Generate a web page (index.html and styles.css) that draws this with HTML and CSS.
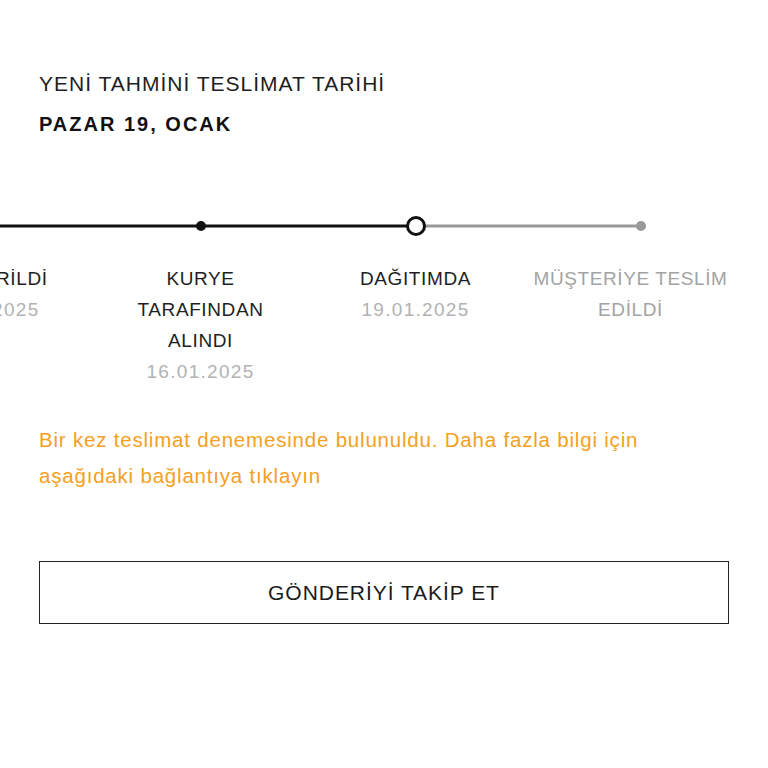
FILE: index.html
```html
<!DOCTYPE html>
<html lang="tr">
<head>
<meta charset="utf-8">
<link rel="stylesheet" href="styles.css">
</head>
<body>
<main class="page">
  <section class="eta">
    <div class="eta-label">YENİ TAHMİNİ TESLİMAT TARİHİ</div>
    <div class="eta-date">PAZAR 19, OCAK</div>
  </section>

  <section class="tracker">
    <svg class="track" width="768" height="30" viewBox="0 0 768 30">
      <line x1="0" y1="15" x2="416" y2="15" stroke="#111" stroke-width="3"/>
      <circle cx="201" cy="15" r="5" fill="#111"/>
      <line x1="416" y1="15" x2="641" y2="15" stroke="#999" stroke-width="3"/>
      <circle cx="641" cy="15" r="5" fill="#999"/>
      <circle cx="416" cy="15" r="8.5" fill="#fff" stroke="#111" stroke-width="3"/>
    </svg>
    <div class="steps">
      <div class="step done">
        <div class="step-name">GÖNDERİLDİ</div>
        <div class="step-date">15.01.2025</div>
      </div>
      <div class="step done">
        <div class="step-name">KURYE<br>TARAFINDAN<br>ALINDI</div>
        <div class="step-date">16.01.2025</div>
      </div>
      <div class="step done">
        <div class="step-name">DAĞITIMDA</div>
        <div class="step-date">19.01.2025</div>
      </div>
      <div class="step todo">
        <div class="step-name">MÜŞTERİYE TESLİM<br>EDİLDİ</div>
      </div>
    </div>
  </section>

  <p class="notice">Bir kez teslimat denemesinde bulunuldu. Daha fazla bilgi için aşağıdaki bağlantıya tıklayın</p>

  <button class="track-btn">GÖNDERİYİ TAKİP ET</button>
</main>
</body>
</html>
```

FILE: styles.css
```css
html, body {
  margin: 0;
  padding: 0;
  background: #fff;
}
body {
  font-family: "Liberation Sans", Arial, Helvetica, sans-serif;
  color: #1a1a1a;
}
.page {
  padding-top: 72px;
  overflow: hidden;
  width: 768px;
}
.eta {
  padding: 0 39px;
}
.eta-label {
  font-size: 21px;
  line-height: 24px;
  letter-spacing: 1px;
  color: #1e1e1e;
}
.eta-date {
  margin-top: 16px;
  font-size: 20px;
  line-height: 24px;
  font-weight: bold;
  letter-spacing: 2px;
  color: #111;
}
.tracker {
  margin-top: 75px;
}
.track {
  display: block;
}
.steps {
  display: flex;
  margin-left: -122px;
  margin-top: 22px;
}
.step {
  flex: 0 0 215px;
  text-align: center;
  font-size: 19px;
  line-height: 31px;
  letter-spacing: 0.6px;
}
.step.done .step-name {
  color: #1e1e1e;
}
.step.todo .step-name {
  color: #a3a3a3;
}
.step-date {
  color: #b2b2b2;
  letter-spacing: 1.3px;
}
.notice {
  margin: 35px 39px 0;
  font-size: 20.5px;
  line-height: 36px;
  letter-spacing: 0.8px;
  color: #f5a020;
}
.track-btn {
  display: block;
  margin: 67px 39px 0;
  width: 690px;
  height: 63px;
  background: #fff;
  border: 1px solid #222;
  border-radius: 0;
  font-family: "Liberation Sans", Arial, sans-serif;
  font-size: 21px;
  letter-spacing: 0.95px;
  color: #1a1a1a;
  padding: 0;
}
```
